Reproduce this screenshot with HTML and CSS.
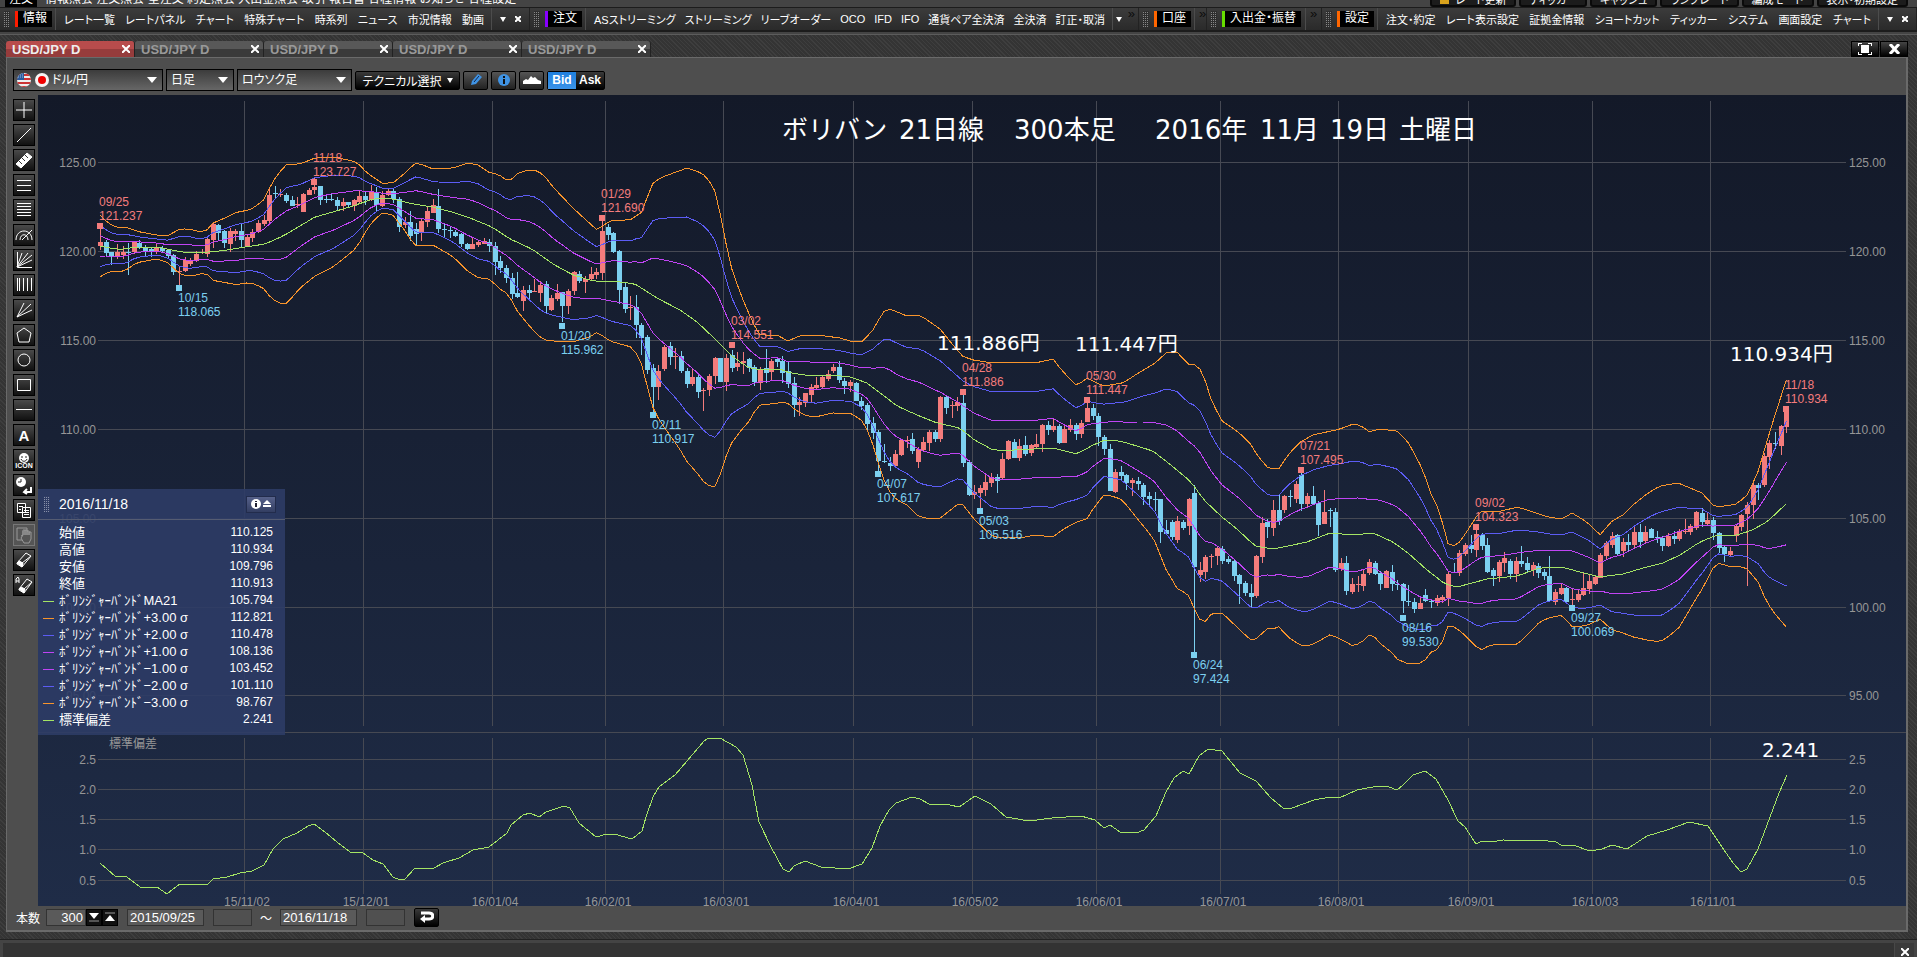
FILE: index.html
```html
<!DOCTYPE html>
<html lang="ja">
<head>
    <meta charset="UTF-8">
    <meta name="viewport" content="width=device-width, initial-scale=1.0">
    <title>USD/JPY D</title>
    <link rel="stylesheet" href="styles.css">
</head>
<body>
    <div class="menubar">
        <span class="label">注文</span><span>情報照会 注文照会 全注文 約定照会 入出金照会 取引 報告書 各種情報 お知らせ 各種設定</span>
        <div class="menubar-buttons">
            <button><i></i>レート更新</button><button>ティッカー</button><button>キャッシュ</button><button>ランプレート</button><button>編成モード</button><button>表示・初期設定</button>
        </div>
    </div>

    <nav class="toolbar">
        <div class="group red">
            <span class="grip"></span><b>情報</b>
            <div class="items"><a href="#">レート一覧</a><a href="#">レートパネル</a><a href="#">チャート</a><a href="#">特殊チャート</a><a href="#">時系列</a><a href="#">ニュース</a><a href="#">市況情報</a><a href="#">動画</a></div>
            <div class="end"><span class="arrow"></span><svg width="6" height="6"><path d="M0 0L6 6M6 0L0 6"/></svg></div>
        </div>
        <div class="group purple">
            <span class="grip"></span><b>注文</b>
            <div class="items"><a href="#">ASストリーミング</a><a href="#">ストリーミング</a><a href="#">リーブオーダー</a><a href="#">OCO</a><a href="#">IFD</a><a href="#">IFO</a><a href="#">通貨ペア全決済</a><a href="#">全決済</a><a href="#">訂正・取消</a></div>
            <div class="end more"><span class="arrow"></span><em>»</em></div>
        </div>
        <div class="group orange">
            <span class="grip"></span><b>口座</b>
            <div class="end more"><em>»</em></div>
        </div>
        <div class="group green">
            <span class="grip"></span><b>入出金・振替</b>
            <div class="end more"><em>»</em></div>
        </div>
        <div class="group orange">
            <span class="grip"></span><b>設定</b>
            <div class="items"><a href="#">注文・約定</a><a href="#">レート表示設定</a><a href="#">証拠金情報</a><a href="#">ショートカット</a><a href="#">ティッカー</a><a href="#">システム</a><a href="#">画面設定</a><a href="#">チャート</a></div>
            <div class="end"><span class="arrow"></span><svg width="6" height="6"><path d="M0 0L6 6M6 0L0 6"/></svg></div>
        </div>
    </nav>

    <main class="workspace">
        <div class="tabs">
            <button class="tab active">USD/JPY D<svg width="8" height="8"><path d="M0 0L8 8M8 0L0 8"/></svg></button>
            <button class="tab">USD/JPY D<svg width="8" height="8"><path d="M0 0L8 8M8 0L0 8"/></svg></button>
            <button class="tab">USD/JPY D<svg width="8" height="8"><path d="M0 0L8 8M8 0L0 8"/></svg></button>
            <button class="tab">USD/JPY D<svg width="8" height="8"><path d="M0 0L8 8M8 0L0 8"/></svg></button>
            <button class="tab">USD/JPY D<svg width="8" height="8"><path d="M0 0L8 8M8 0L0 8"/></svg></button>
            <div class="window-buttons">
                <button aria-label="最大化"><svg width="14" height="12"><path d="M0 3V0H4M10 0H14V3M14 9V12H10M4 12H0V9" fill="none" stroke="#fff" stroke-width="2"/><path d="M3 2H11V10H3Z" fill="#fff"/></svg></button>
                <button aria-label="閉じる"><svg width="11" height="10"><path d="M1 0L10 10M10 0L1 10" stroke="#fff" stroke-width="3"/></svg></button>
            </div>
        </div>

        <section class="panel">
            <div class="controls">
                <label class="select pair">
                    <svg width="34" height="16" viewBox="0 0 34 16">
                        <defs><clipPath id="ball"><circle cx="8" cy="8" r="7"/></clipPath></defs>
                        <g clip-path="url(#ball)"><path d="M0 0H16V16H0Z" fill="#eee"/><path d="M0 3H16M0 7H16M0 11H16M0 15H16" stroke="#c33" stroke-width="2"/><path d="M0 0H8V8H0Z" fill="#2a5a9c"/><path d="M2 3H8M2 5H8" stroke="#9bd" stroke-dasharray="1 1"/></g>
                        <circle cx="26" cy="8" r="7" fill="#f4f4f4"/><circle cx="26" cy="8" r="4" fill="#e00"/>
                    </svg>
                    <select aria-label="通貨ペア"><option>ドル/円</option></select>
                </label>
                <label class="select span"><select aria-label="足種"><option>日足</option></select></label>
                <label class="select kind"><select aria-label="チャート種類"><option>ロウソク足</option></select></label>
                <button class="technical">テクニカル選択<span class="arrow"></span></button>
                <button class="icon" aria-label="描画"><svg width="14" height="14"><path d="M2 12L3 8L9 1L13 4L7 11Z" fill="#3f93e4"/><path d="M5 9L10 3" stroke="#124" fill="none"/></svg></button>
                <button class="icon" aria-label="情報"><svg width="14" height="14"><circle cx="7" cy="7" r="6" fill="#3f93e4"/><path d="M6 3H8V5H6ZM6 6H8V11H6Z" fill="#111"/></svg></button>
                <button class="icon" aria-label="エリア"><svg width="18" height="12"><path d="M0 10V7L3 5L5 6L8 2L10 4L12 3L15 6L18 7V10Z" fill="#fff"/></svg></button>
                <div class="side"><button class="on">Bid</button><button>Ask</button></div>
            </div>

            <div class="body">
                <div class="tools">
                    <button aria-label="十字線"><svg><path d="M11 3V19M3 11H19"/></svg></button>
                    <button aria-label="直線"><svg><path d="M4 18L18 4"/></svg></button>
                    <button aria-label="定規"><svg><path d="M3 15L14 4L19 8L8 19Z" fill="#fff"/><path d="M6 12L9 15M9 9L12 12M12 6L15 9" stroke="#333"/></svg></button>
                    <button aria-label="三本線"><svg><path d="M4 6.5H18M4 11.5H18M4 16.5H18"/></svg></button>
                    <button aria-label="五本線"><svg><path d="M4 4.5H18M4 7.5H18M4 10.5H18M4 13.5H18M4 16.5H18"/></svg></button>
                    <button aria-label="円弧"><svg><path d="M3 16C3 4 19 4 19 16M7 16C7 9 15 9 15 16M9 16L19 6"/></svg></button>
                    <button aria-label="ファン"><svg><path d="M4.5 3V18.5H19M4 18L9 4M4 18L15 4M4 18L19 6M4 18L19 11"/></svg></button>
                    <button aria-label="縦線"><svg><path d="M4.5 4V17M6.5 4V17M10.5 4V17M14.5 4V17M18.5 4V17"/></svg></button>
                    <button aria-label="扇"><svg><path d="M4 18L11 4M4 18L18 5M4 18L19 11"/></svg></button>
                    <button aria-label="五角形"><svg><path d="M11 4L18 9L16 18H6L4 9Z"/></svg></button>
                    <button aria-label="円"><svg><circle cx="11" cy="11" r="6"/></svg></button>
                    <button aria-label="四角"><svg><path d="M4.5 5.5H17.5V16.5H4.5Z"/></svg></button>
                    <button aria-label="水平線"><svg><path d="M3 10.5H19"/></svg></button>
                    <button class="text">A</button>
                    <button class="face"><svg viewBox="0 0 22 12"><circle cx="11" cy="7" r="5" fill="#fff" stroke="none"/><path d="M9 5V7M13 5V7M8 8C9 11 13 11 14 8" stroke="#222"/></svg><span>ICON</span></button>
                    <button aria-label="時刻"><svg><circle cx="8" cy="8" r="5" fill="#fff" stroke="none"/><path d="M8 5V8H5" stroke="#222"/><path d="M18 13V18H12M14 15L11 18L14 20" stroke-width="2"/></svg></button>
                    <button aria-label="コピー"><svg><path d="M4.5 4.5H12.5V13.5H4.5ZM9.5 8.5H17.5V18.5H9.5Z" fill="#222"/><path d="M6 7.5H10M6 10.5H8M11 11.5H16M11 13.5H16M11 15.5H16"/></svg></button>
                    <button aria-label="移動" class="off"><svg><path d="M9 16H4V4H14V7"/><path d="M8 12L10 11V7M10 11V6H12V11V6H14V11V7H16V11V8H18V15L16 19H11L8 14Z"/></svg></button>
                    <button aria-label="消しゴム"><svg><path d="M4 14L13 4L18 7L9 18L4 15ZM9 18V14L18 7M9 14L5 12"/><path d="M4 14L6 12L10 14L9 18Z" fill="#fff"/></svg></button>
                    <button aria-label="全消去"><svg><path d="M6 15L14 5L19 8L11 19L6 16ZM11 15L19 8"/><path d="M6 15L8 13L12 15L11 19Z" fill="#fff"/><path d="M3 9V5L5 3L6 5V9M3 7H6"/></svg></button>
                </div>

                <div class="chart">
                    <svg id="plot" viewBox="38 95 1868 811" preserveAspectRatio="xMinYMin meet"></svg>
                    <div class="legend">
                        <div class="legend-head">
                            <span class="grip"></span><time>2016/11/18</time>
                            <button aria-label="情報"><svg width="22" height="12"><circle cx="6" cy="6" r="5" fill="#fff"/><path d="M5 3H7V4H5ZM5 5H7V9H5Z" fill="#223"/><path d="M13 6L17 2L21 6ZM13 7H21V9H13Z" fill="#fff"/></svg></button>
                        </div>
                        <table>
                            <tr><th></th><td>始値</td><td>110.125</td></tr>
                            <tr><th></th><td>高値</td><td>110.934</td></tr>
                            <tr><th></th><td>安値</td><td>109.796</td></tr>
                            <tr><th></th><td>終値</td><td>110.913</td></tr>
                            <tr class="ma"><th></th><td>ﾎﾞﾘﾝｼﾞｬｰﾊﾞﾝﾄﾞMA21</td><td>105.794</td></tr>
                            <tr class="s3"><th></th><td>ﾎﾞﾘﾝｼﾞｬｰﾊﾞﾝﾄﾞ+3.00 σ</td><td>112.821</td></tr>
                            <tr class="s2"><th></th><td>ﾎﾞﾘﾝｼﾞｬｰﾊﾞﾝﾄﾞ+2.00 σ</td><td>110.478</td></tr>
                            <tr class="s1"><th></th><td>ﾎﾞﾘﾝｼﾞｬｰﾊﾞﾝﾄﾞ+1.00 σ</td><td>108.136</td></tr>
                            <tr class="s1"><th></th><td>ﾎﾞﾘﾝｼﾞｬｰﾊﾞﾝﾄﾞ−1.00 σ</td><td>103.452</td></tr>
                            <tr class="s2"><th></th><td>ﾎﾞﾘﾝｼﾞｬｰﾊﾞﾝﾄﾞ−2.00 σ</td><td>101.110</td></tr>
                            <tr class="s3"><th></th><td>ﾎﾞﾘﾝｼﾞｬｰﾊﾞﾝﾄﾞ−3.00 σ</td><td>98.767</td></tr>
                            <tr class="ma"><th></th><td>標準偏差</td><td>2.241</td></tr>
                        </table>
                    </div>
                </div>
            </div>

            <div class="range">
                <label for="bars">本数</label>
                <div class="stepper"><input id="bars" value="300"><button aria-label="減らす"><svg width="10" height="10"><path d="M0 1H10L5 7Z" fill="#fff"/><path d="M0 9H10" stroke="#999"/></svg></button><button aria-label="増やす"><svg width="10" height="10"><path d="M0 9H10L5 3Z" fill="#fff"/><path d="M0 1H10" stroke="#999"/></svg></button></div>
                <input class="date" aria-label="開始日" value="2015/09/25">
                <input class="time" aria-label="開始時刻">
                <span>～</span>
                <input class="date" aria-label="終了日" value="2016/11/18">
                <input class="time" aria-label="終了時刻">
                <button class="apply" aria-label="適用"><svg width="14" height="12"><path d="M1 2H9C14 2 14 8 9 8H4" fill="none" stroke="#fff" stroke-width="3"/><path d="M0 8L5 4V12Z" fill="#fff"/></svg></button>
            </div>
        </section>
    </main>

    <footer class="status"><div></div><button aria-label="閉じる"><svg width="8" height="8"><path d="M0 0L8 8M8 0L0 8"/></svg></button></footer>

    <script src="chart.js"></script>
</body>
</html>
```

FILE: styles.css
```css
* {
    box-sizing: border-box;
}
body {
    margin: 0;
    height: 100vh;
    display: flex;
    flex-direction: column;
    overflow: hidden;
    background-color: #444;
    color: #fff;
    font-family: "Liberation Sans", "Noto Sans CJK JP", sans-serif;
    font-size: 12px;
}
button, input, select {
    font: inherit;
    color: inherit;
    margin: 0;
    padding: 0;
    border: none;
    border-radius: 0;
}
a {
    color: #fff;
    text-decoration: none;
}

/* top menu, scrolled almost out of view */
.menubar {
    height: 7px;
    flex: none;
    display: flex;
    align-items: flex-end;
    gap: 8px;
    padding-left: 5px;
    overflow: hidden;
    line-height: 16px;
    font-feature-settings: "palt";
}
.menubar .label {
    background: #000;
    padding: 0 4px;
}
.menubar-buttons {
    margin: 0 9px 0 auto;
    display: flex;
    gap: 3px;
}
.menubar-buttons button {
    height: 17px;
    padding: 0 8px;
    font-size: 11px;
    background: #1c1c1c;
    border: 2px solid #0a0a0a;
    border-radius: 3px;
}
.menubar-buttons i {
    display: inline-block;
    width: 9px;
    height: 9px;
    margin-right: 6px;
    background: #d9a21c;
}

.toolbar {
    flex: none;
    height: 25px;
    display: grid;
    grid-template-columns: 530fr 609fr 68fr 115fr 595fr;
    background: linear-gradient(#3c3c3c, #2a2a2a);
    border-top: 1px solid #1c1c1c;
    border-bottom: 2px solid #1c1c1c;
    font-size: 11px;
    font-feature-settings: "palt";
    white-space: nowrap;
}
.group {
    display: flex;
    align-items: center;
    min-width: 0;
    border-right: 1px solid #222;
    padding-left: 4px;
}
.grip {
    width: 6px;
    height: 16px;
    flex: none;
    background:
        repeating-linear-gradient(#2e2e2e 0 1px, transparent 1px 2px),
        repeating-linear-gradient(90deg, #888 0 1px, #2e2e2e 1px 2px);
}
.group b {
    margin: 0 3px 0 5px;
    padding: 0 5px;
    height: 16px;
    line-height: 15px;
    background: #000;
    border-left: 3px solid #ff1c00;
    font-size: 12px;
    font-weight: normal;
}
.group.purple b { border-color: #80f; }
.group.orange b { border-color: #f60; }
.group.green b { border-color: #6d0; }
.items {
    flex: 1;
    height: 22px;
    padding: 0 7px 0 8px;
    border-left: 1px solid #4c4c4c;
    display: flex;
    align-items: center;
    justify-content: space-between;
}
.end {
    width: 38px;
    height: 22px;
    flex: none;
    display: flex;
    align-items: center;
    justify-content: space-around;
    padding: 0 3px;
    border-left: 1px solid #4c4c4c;
}
.end.more {
    width: 26px;
    padding: 0;
}
.orange .end.more, .green .end.more {
    width: 16px;
    margin-left: auto;
}
.end em {
    align-self: flex-start;
    font-style: normal;
    font-size: 13px;
    line-height: 12px;
    color: #0c0c0c;
}
.arrow {
    border: 3px solid transparent;
    border-top: 5px solid #fff;
    border-bottom: none;
}
.end svg, .tab svg, .status svg {
    stroke: #fff;
    stroke-width: 2;
}

.workspace {
    flex: 1;
    min-height: 0;
    margin-top: 2px;
    padding: 6px 9px 7px 6px;
    display: flex;
    flex-direction: column;
    border-top: 1px solid #5c5c5c;
    background: repeating-linear-gradient(45deg, #3e3e3e 0 1px, #343434 1px 3px);
}
.tabs {
    flex: none;
    height: 16px;
    display: flex;
}
.tab {
    width: 129px;
    padding: 0 4px 0 6px;
    display: flex;
    align-items: center;
    justify-content: space-between;
    background: linear-gradient(#585858 50%, #3a3a3a 50%);
    border-right: 1px solid #222;
    border-radius: 3px 3px 0 0;
    color: #999;
    font-size: 13px;
    font-weight: bold;
}
.tab.active {
    background: linear-gradient(#b84c4c 50%, #963c3c 50%);
    color: #eee;
}
.window-buttons {
    margin-left: auto;
    display: flex;
    gap: 1px;
}
.window-buttons button {
    width: 28px;
    display: grid;
    place-items: center;
    background: linear-gradient(#444, #000);
    border: 1px solid #000;
}

.panel {
    flex: 1;
    min-height: 0;
    display: flex;
    flex-direction: column;
    background: #4e4e4e;
    border: 1px solid #6a6a6a;
    border-width: 1px 2px 2px 1px;
}
.controls {
    flex: none;
    height: 37px;
    padding: 11px 6px 4px;
    display: flex;
    align-items: center;
    gap: 3px;
}
.select {
    position: relative;
    height: 22px;
    display: flex;
    align-items: center;
    border: 1px solid #000;
    background: linear-gradient(#3c3c3c, #666);
}
.select select {
    flex: 1;
    height: 20px;
    padding-left: 4px;
    appearance: none;
    background: none;
    outline: none;
    font-feature-settings: "palt";
}
.select::after {
    content: "";
    position: absolute;
    right: 5px;
    border: 5px solid transparent;
    border-top: 6px solid #fff;
    border-bottom: none;
    pointer-events: none;
}
.pair { width: 150px; padding-left: 2px; }
.pair select { padding-left: 2px; }
.span { width: 68px; }
.kind { width: 115px; }
.technical, .icon, .side, .apply {
    height: 19px;
    border: 1px solid #000;
    border-radius: 2px;
    background: linear-gradient(#3a3a3a, #000);
}
.technical {
    width: 105px;
    display: flex;
    align-items: center;
    justify-content: center;
    gap: 5px;
    font-feature-settings: "palt";
}
.icon {
    width: 25px;
    display: grid;
    place-items: center;
    background: linear-gradient(#555, #222);
}
.side {
    width: 58px;
    display: flex;
}
.side button {
    flex: 1;
    background: none;
    font-weight: bold;
}
.side .on {
    background: linear-gradient(#1f7fdd, #3a93e8);
}

.body {
    flex: 1;
    min-height: 0;
    display: flex;
}
.tools {
    width: 31px;
    flex: none;
    padding: 4px 0 0 6px;
    display: flex;
    flex-direction: column;
    gap: 3px;
}
.tools button {
    width: 22px;
    height: 22px;
    flex: none;
    border: 1px solid #000;
    background: linear-gradient(#4a4a4a, #111);
    overflow: hidden;
}
.tools svg {
    display: block;
    width: 22px;
    height: 22px;
    margin: -1px;
    fill: none;
    stroke: #fff;
}
.tools .text {
    font-size: 15px;
    font-weight: bold;
}
.tools .face svg {
    height: 12px;
}
.tools .face span {
    display: block;
    font-size: 7px;
    line-height: 7px;
    font-weight: bold;
}
.tools .off {
    background: #555;
    border-color: #777;
}
.tools .off svg {
    stroke: #999;
}

.chart {
    position: relative;
    flex: 1;
    min-width: 0;
    overflow: hidden;
    background: linear-gradient(#131928, #1f2c47);
}
#plot {
    display: block;
    width: 100%;
    height: 100%;
    font-size: 12px;
}
.grid { stroke: #464953; shape-rendering: crispEdges; }
.axis { fill: #969696; }
.axis .right { text-anchor: start; }
.axis .left { text-anchor: end; }
.axis .day { text-anchor: middle; }
.up { fill: #f47c7c; }
.down { fill: #7cd0f0; }
.bars { shape-rendering: crispEdges; }
.line { fill: none; stroke-width: 1; shape-rendering: crispEdges; }
.line.ma { stroke: #a4e464; }
.line.s1 { stroke: #c044f4; }
.line.s2 { stroke: #5c5cf4; }
.line.s3 { stroke: #f8942c; }
.note {
    fill: #fff;
    font-family: "DejaVu Sans", "Noto Sans CJK JP", sans-serif;
    font-size: 20px;
}
.note.title { font-size: 26px; }

.legend {
    position: absolute;
    left: 0;
    top: 394px;
    width: 247px;
    height: 246px;
    background: rgba(46, 60, 102, .9);
}
.legend-head {
    height: 31px;
    padding: 0 9px 0 6px;
    display: flex;
    align-items: center;
    border-bottom: 1px solid #555c72;
    font-size: 14px;
}
.legend-head .grip {
    background:
        repeating-linear-gradient(#2f3c64 0 1px, transparent 1px 2px),
        repeating-linear-gradient(90deg, #8890a8 0 1px, #2f3c64 1px 2px);
}
.legend-head time {
    margin-left: 9px;
}
.legend-head button {
    width: 30px;
    height: 17px;
    margin-left: auto;
    display: grid;
    place-items: center;
    background: linear-gradient(#56618a, #333e62);
    border: 1px solid #222c4c;
}
.legend table {
    width: 100%;
    margin-top: 4px;
    border-collapse: collapse;
}
.legend th, .legend td {
    height: 17px;
    padding: 0;
    line-height: 17px;
    font-size: 13px;
    white-space: nowrap;
}
.legend th {
    width: 21px;
    padding: 2px 5px 0;
}
.legend th::after {
    content: "";
    display: block;
    height: 1px;
}
.legend .ma th::after { background: #a4e464; }
.legend .s1 th::after { background: #c044f4; }
.legend .s2 th::after { background: #5c5cf4; }
.legend .s3 th::after { background: #f8942c; }
.legend td:last-child {
    padding-right: 12px;
    text-align: right;
    font-size: 12px;
}

.range {
    flex: none;
    height: 24px;
    padding: 0 9px 2px;
    display: flex;
    align-items: center;
    gap: 9px;
    font-size: 12px;
}
.range input {
    height: 17px;
    padding: 0 2px;
    border: 1px solid #333;
    background: #5a5a5a;
    font-size: 13px;
    line-height: 15px;
}
.range label {
    margin-right: -3px;
}
.range span {
    margin: 0 -1px;
}
.range .date { width: 77px; }
.range .time {
    width: 39px;
    background: #505050;
}
.stepper {
    display: flex;
}
.stepper input {
    width: 40px;
    text-align: right;
}
.stepper button {
    width: 16px;
    height: 17px;
    display: grid;
    place-items: center;
    background: #111;
    border: 1px solid #000;
}
.range .apply {
    width: 25px;
    display: grid;
    place-items: center;
}

.status {
    flex: none;
    height: 18px;
    padding: 3px 3px 0;
    display: flex;
    border-top: 1px solid #222;
    overflow: hidden;
}
.status div {
    flex: 1;
    background: #333;
}
.status button {
    width: 20px;
    padding-top: 2px;
    background: #3a3a3a;
    border-left: 1px solid #484848;
}
```

FILE: chart.js
```js
const plot = document.getElementById('plot');

// r = close above open, b = close below open; then high, body top, body bottom, low
const bars = `r226 242 246 250,b240 242 253 257,b252 252 256 265,r244 252 256 259,r246 252 255 259,b243 252 253 275,r241 242 252 254,b240 243 248 249,b245 248 252 257,b248 249 252 257,
r243 247 252 254,b246 248 251 252,b249 250 256 259,b254 255 272 275,r267 271 272 286,r257 260 271 272,r258 261 264 266,r251 254 261 262,r249 252 253 254,r237 239 254 257,
r223 224 240 248,b224 225 233 240,b230 231 243 248,r228 231 244 252,r229 231 234 241,b223 231 240 247,r235 237 246 247,r229 232 238 242,r220 223 232 233,r215 220 224 226,
r187 195 221 223,b186 193 194 198,r189 194 195 197,b193 195 201 203,b196 200 206 206,r197 204 205 208,r193 194 212 212,r188 190 195 195,r177 187 190 194,b186 186 200 205,
b196 199 200 203,b193 199 200 201,b197 200 206 211,r198 202 206 211,b202 202 205 207,r199 200 206 211,r191 196 202 203,b192 196 200 205,r185 192 200 201,b187 193 205 211,
r191 195 206 207,r188 191 195 196,b189 191 199 203,b197 199 227 232,r217 222 225 228,b211 222 236 241,b223 229 234 245,r219 221 232 241,r207 211 222 227,r199 205 213 213,
b189 206 229 233,b223 229 230 237,b227 230 231 238,b230 232 236 237,b233 234 244 247,b243 244 249 250,r238 244 249 249,r241 242 245 247,r238 241 244 244,b239 242 246 252,
b242 246 262 275,b256 261 268 273,b265 268 278 283,b273 278 294 299,b272 293 297 298,r286 290 301 311,b285 290 293 301,r279 291 292 292,r281 285 293 302,b281 284 306 314,
r295 298 310 311,r284 293 299 301,b292 292 306 322,r289 291 306 314,r271 272 291 295,b271 274 281 283,r276 279 282 293,r267 274 279 281,r268 272 275 279,r219 231 273 280,
b224 227 235 240,b232 233 252 253,b250 251 290 304,b283 287 309 313,r296 307 308 320,b295 307 325 338,b323 325 338 355,b335 337 370 374,b364 368 387 413,r365 371 387 400,
r345 347 369 371,b342 346 357 365,r348 356 357 369,b351 356 371 373,b368 371 384 388,r369 377 384 386,b374 377 392 398,r388 390 391 411,r374 376 390 396,r357 358 376 384,
b358 358 382 382,r354 358 382 391,b350 355 368 372,r352 363 367 371,r352 361 363 374,b358 359 368 372,b365 367 382 386,r367 369 383 390,b349 368 373 383,r359 361 372 380,
b357 359 362 367,b356 361 373 383,b361 371 384 388,b377 383 405 417,r397 402 405 416,r393 393 403 407,r384 387 395 403,r377 385 388 390,r375 377 387 388,r370 374 379 381,
r364 367 371 373,b361 367 380 383,b378 381 386 394,r380 382 386 392,b382 383 401 401,b397 401 406 410,b403 405 424 430,b417 423 433 439,b430 432 461 472,b444 461 462 463,
b457 463 466 471,r450 454 466 467,r439 440 455 456,r436 440 441 448,b433 439 451 454,r447 449 462 468,r437 442 450 452,r430 432 443 451,b430 432 439 442,r396 397 439 442,
b395 397 408 414,r401 405 406 418,r397 402 406 411,b395 403 463 467,b460 462 495 496,r485 492 495 499,r485 488 493 508,r474 482 490 496,r473 477 483 487,b474 477 481 493,
r453 459 478 479,r440 441 459 460,b439 442 458 458,r439 446 458 461,b436 445 454 456,r444 445 453 456,r434 444 447 449,r424 425 444 452,b421 425 430 435,r418 426 430 432,
b424 426 443 444,r426 429 443 443,r419 425 430 432,b423 425 434 440,r420 423 434 438,r400 408 422 422,b404 408 416 420,b413 416 437 446,b435 437 449 455,b444 449 491 491,
r469 472 492 493,b466 472 476 480,b474 475 483 490,r478 480 483 496,b477 481 484 490,b483 485 497 505,b492 496 499 507,b492 499 500 511,b499 499 532 543,b520 530 534 534,
b520 522 537 540,r516 521 540 543,b520 522 528 530,r498 499 526 535,b485 493 567 652,r562 570 575 582,r555 557 572 579,r554 556 557 568,r547 548 556 565,b546 549 561 564,
b556 559 562 564,b560 561 576 581,b574 575 584 604,b581 583 593 596,b584 593 597 608,r555 556 596 598,r517 523 557 563,b519 522 527 538,r500 510 528 536,b494 510 521 525,
r495 496 510 513,b490 496 497 507,r481 484 499 503,b472 475 504 511,r493 496 504 508,b486 496 504 504,b501 503 525 536,r490 512 524 524,b508 510 511 527,b508 512 570 572,
r558 563 569 571,b556 563 591 595,r578 584 592 594,r576 584 585 592,r570 574 586 591,r559 562 573 575,b561 563 574 575,b571 573 584 590,r570 571 588 588,b565 572 584 591,
b580 584 585 590,b583 584 601 613,b585 601 602 606,b598 602 609 613,r598 603 609 609,b589 595 601 602,b599 601 602 608,r595 598 603 606,r595 597 600 603,r572 574 598 606,
b563 572 573 573,r550 553 573 576,r543 545 554 556,b535 545 549 553,r528 534 550 557,b533 535 546 550,b538 545 572 573,b568 570 576 586,r560 562 576 582,r552 558 563 572,
b559 561 574 579,r557 561 574 582,b546 561 564 567,b557 563 570 573,r562 565 570 576,b563 566 573 578,b569 572 576 580,b556 576 601 602,r589 592 602 605,r584 588 594 595,
b587 588 602 603,r588 599 600 608,r590 594 600 602,r573 588 595 596,r574 581 589 594,r576 577 584 585,r553 555 578 578,r541 543 556 559,r532 536 545 548,b534 535 554 555,
r538 542 551 557,b534 542 545 552,r527 532 545 548,b524 532 542 548,r526 532 541 543,b528 529 538 538,b531 537 538 543,b536 538 546 551,r533 536 546 547,b531 536 539 544,
r529 531 539 541,r519 531 532 534,r524 526 532 535,r511 512 528 530,b508 513 522 527,r513 520 524 526,b517 520 533 540,b532 533 548 553,b545 547 554 562,r547 551 555 557,
r524 526 536 542,r514 515 527 531,r502 505 514 586,r483 485 505 519,b483 485 488 500,r453 456 485 487,r440 443 457 469,b432 443 444 449,r425 426 446 455,r407 407 427 433`.split(',').map(s => s.trim());

// x,y pairs
const average = '100,246 115,249 125,249 135,247 157,247 167,249 182,252 197,253 220,251 233,249 245,247 265,244 283,236 300,226 315,217 333,212 353,206 373,199 383,198 393,199 413,204 433,207 452,212 470,218 492,227 510,239 532,249 553,264 573,275 593,281 613,281 635,284 657,298 680,310 697,322 713,337 732,356 747,367 760,370 780,369 790,373 813,376 833,375 850,377 867,383 883,395 897,406 917,415 937,423 960,428 973,439 993,450 1017,450 1053,448 1077,454 1093,445 1105,440 1120,441 1140,447 1153,451 1172,466 1190,481 1205,501 1222,517 1237,529 1255,546 1273,549 1293,545 1307,542 1330,533 1353,535 1373,533 1393,542 1408,553 1427,570 1445,584 1457,587 1487,579 1517,576 1540,568 1562,567 1580,572 1600,577 1623,574 1643,568 1663,563 1680,555 1700,542 1717,535 1733,536 1750,531 1767,522 1787,503';
const upper = '100,215 108,223 115,227 125,227 140,232 157,235 167,236 180,229 190,229 200,232 207,230 213,223 225,218 237,212 250,210 263,201 269,189 277,175 287,164 300,164 315,158 333,157 343,159 357,162 367,173 382,183 393,183 405,173 415,163 423,165 433,169 453,168 468,163 478,165 490,173 498,174 506,180 512,179 518,173 532,169 543,174 553,187 573,208 597,230 607,223 613,220 630,220 642,212 647,198 653,183 660,178 687,168 702,173 710,182 717,195 723,230 732,270 743,300 753,323 760,335 777,335 788,341 802,335 817,335 840,338 850,341 862,342 873,330 883,312 890,309 907,316 920,315 940,329 962,356 973,360 993,363 1023,362 1035,363 1053,359 1060,368 1068,377 1077,386 1087,378 1103,386 1123,383 1140,372 1157,362 1165,353 1177,352 1188,364 1198,365 1205,380 1212,402 1222,421 1237,431 1250,443 1257,455 1268,468 1278,470 1288,455 1300,442 1313,435 1340,429 1353,424 1362,426 1368,432 1380,429 1397,431 1408,442 1423,470 1430,492 1440,512 1447,543 1453,546 1460,542 1473,522 1480,511 1497,512 1518,507 1548,517 1562,519 1572,513 1587,522 1600,535 1612,521 1623,515 1633,505 1648,493 1660,486 1678,483 1702,493 1713,505 1718,507 1737,504 1747,495 1757,475 1765,448 1775,415 1787,378';
const deviation = '100,863 115,876 127,877 140,887 157,887 167,894 173,889 180,884 207,885 213,879 227,877 240,873 252,871 264,865 273,849 283,839 297,833 308,826 314,824 325,832 337,842 350,852 363,853 373,860 383,864 393,877 400,880 405,879 414,869 434,868 443,863 459,858 473,850 489,847 507,833 511,825 523,815 530,813 539,817 546,812 564,806 570,808 579,823 596,837 607,834 614,834 632,839 642,831 646,817 653,797 659,787 675,775 693,754 704,741 709,738 720,738 736,747 743,755 752,785 759,822 771,847 783,869 789,872 794,866 805,861 821,867 848,869 862,864 872,848 880,826 889,810 896,803 912,797 920,799 929,804 950,805 959,807 975,796 991,804 1006,817 1029,821 1052,818 1081,816 1095,820 1104,828 1110,825 1120,832 1136,833 1144,830 1156,816 1166,792 1174,778 1183,771 1189,774 1199,756 1208,749 1222,751 1240,773 1256,781 1271,798 1283,808 1292,808 1303,804 1314,800 1330,797 1339,798 1357,790 1378,786 1389,787 1397,790 1403,785 1413,775 1425,771 1436,779 1448,800 1458,821 1465,827 1476,844 1482,841 1492,842 1503,840 1548,841 1556,842 1561,845 1573,845 1590,851 1602,849 1612,845 1627,849 1647,836 1667,830 1689,822 1708,826 1722,847 1733,863 1741,872 1747,869 1758,849 1770,817 1779,793 1787,775';

// bar number, date, price, high or low
const peaks = [
    [0, '09/25', '121.237', 'up'], [14, '10/15', '118.065', 'down'], [38, '11/18', '123.727', 'up'],
    [82, '01/20', '115.962', 'down'], [89, '01/29', '121.690', 'up'], [98, '02/11', '110.917', 'down'],
    [112, '03/02', '114.551', 'up'], [138, '04/07', '107.617', 'down'], [153, '04/28', '111.886', 'up'],
    [156, '05/03', '105.516', 'down'], [175, '05/30', '111.447', 'up'], [194, '06/24', '97.424', 'down'],
    [213, '07/21', '107.495', 'up'], [231, '08/16', '99.530', 'down'], [244, '09/02', '104.323', 'up'],
    [261, '09/27', '100.069', 'down'], [299, '11/18', '110.934', 'up']
];
const months = [
    [244, '15/11/02'], [363, '15/12/01'], [492, '16/01/04'], [605, '16/02/01'], [723, '16/03/01'],
    [853, '16/04/01'], [972, '16/05/02'], [1096, '16/06/01'], [1220, '16/07/01'], [1338, '16/08/01'],
    [1468, '16/09/01'], [1592, '16/10/03'], [1710, '16/11/01']
];

const barX = i => 100 + i * 5.64;
const priceY = p => 162 + (125 - p) * 17.78;
const devY = v => 759 + (2.5 - v) * 60.3;

const add = (parent, name, attrs, text) => {
    const node = document.createElementNS('http://www.w3.org/2000/svg', name);
    for (const key in attrs) node.setAttribute(key, attrs[key]);
    if (text) node.textContent = text;
    parent.appendChild(node);
    return node;
};
const points = str => str.split(' ').map(p => p.split(',').map(Number));
const at = (pts, x) => {
    let n = 1;
    while (n < pts.length - 1 && pts[n][0] < x) n++;
    const [x1, y1] = pts[n - 1], [x2, y2] = pts[n];
    return y1 + (y2 - y1) * (x - x1) / (x2 - x1);
};

const grid = add(plot, 'g', { class: 'grid' });
const axis = add(plot, 'g', { class: 'axis' });
const row = (y, label) => {
    y = Math.round(y) + 0.5;
    add(grid, 'path', { d: `M98 ${y}H1846` });
    add(axis, 'text', { x: 96, y: y + 4.5, class: 'left' }, label);
    add(axis, 'text', { x: 1849, y: y + 4.5, class: 'right' }, label);
};
for (let p = 125; p >= 95; p -= 5) row(priceY(p), p.toFixed(2));
for (let v = 2.5; v > 0; v -= 0.5) row(devY(v), v.toFixed(1));
months.forEach(([x, label]) => {
    add(grid, 'path', { d: `M${x + 0.5} 101V726M${x + 0.5} 738V894` });
    add(axis, 'text', { x: x + 3, y: 906, class: 'day' }, label);
});
add(grid, 'path', { d: 'M38 732.5H1906' });
add(axis, 'text', { x: 109, y: 748 }, '標準偏差');

const candles = add(plot, 'g', { class: 'bars' });
bars.forEach((bar, i) => {
    const [high, top, bottom, low] = bar.slice(1).split(' ').map(Number);
    const x = Math.round(barX(i));
    const cls = bar[0] === 'r' ? 'up' : 'down';
    add(candles, 'rect', { x, y: high, width: 1, height: low - high, class: cls });
    add(candles, 'rect', { x: x - 2, y: top, width: 5, height: bottom - top || 1, class: cls });
});

const ma = points(average), top3 = points(upper);
[-3, 3, -2, 2, -1, 1, 0].forEach(k => {
    const d = bars.map((_, i) => {
        const x = barX(i), mid = at(ma, x);
        return x.toFixed(1) + ',' + (mid - k * (mid - at(top3, x)) / 3).toFixed(1);
    });
    add(plot, 'polyline', { points: d.join(' '), class: 'line ' + (k ? 's' + Math.abs(k) : 'ma') });
});
add(plot, 'polyline', { points: deviation, class: 'line ma' });

peaks.forEach(([i, date, price, side]) => {
    const x = Math.round(barX(i));
    const y = Math.round(priceY(price)) + (side === 'up' ? -3 : 3);
    const base = y + (side === 'up' ? -20 : 14);
    add(plot, 'rect', { x: x - 3, y: y - 3, width: 6, height: 6, class: side });
    add(plot, 'text', { x: x - 1, y: base, class: side }, date);
    add(plot, 'text', { x: x - 1, y: base + 14, class: side }, price);
});

[[782, 'ボリバン'], [899, '21日線'], [1014, '300本足'], [1155, '2016年'], [1260, '11月'], [1330, '19日'], [1399, '土曜日']].forEach(([x, text]) => {
    add(plot, 'text', { x, y: 139, class: 'note title' }, text);
});
[[937, 350, '111.886円'], [1075, 351, '111.447円'], [1730, 361, '110.934円'], [1762, 757, '2.241']].forEach(([x, y, text]) => {
    add(plot, 'text', { x, y, class: 'note' }, text);
});
```
